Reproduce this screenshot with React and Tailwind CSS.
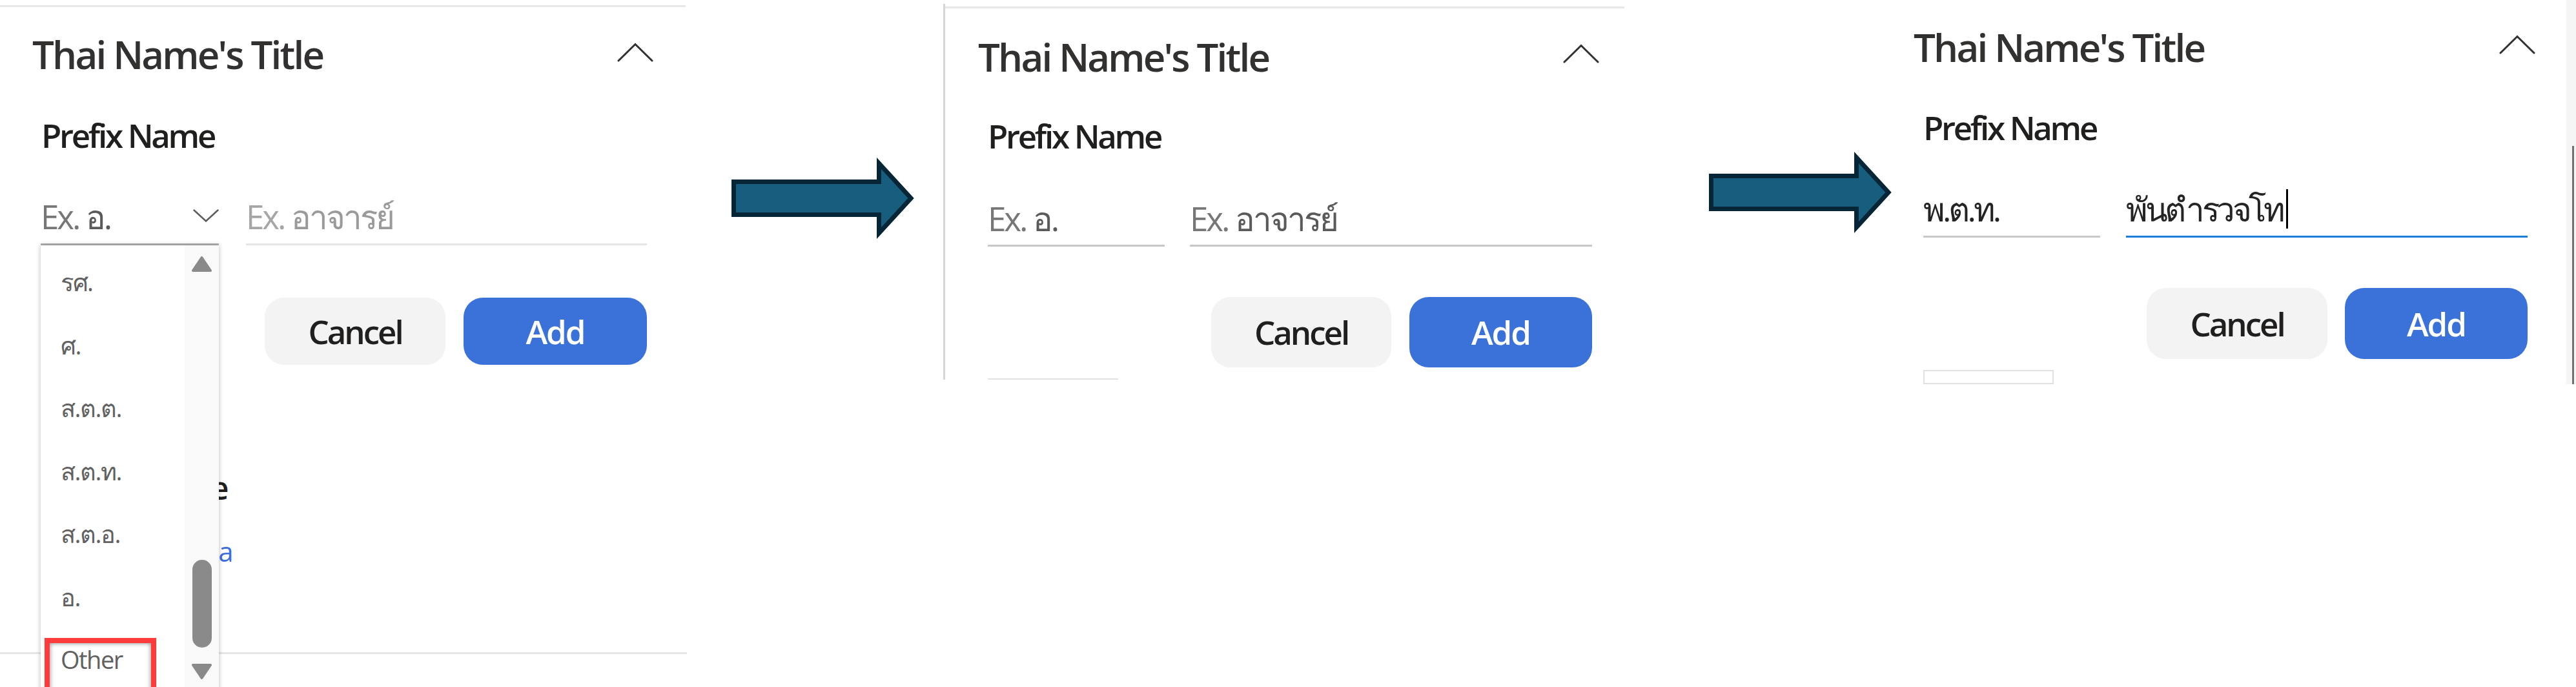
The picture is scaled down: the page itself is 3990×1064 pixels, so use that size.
import React from "react";

function ChevronUp({ className = "" }) {
  return (
    <svg className={className} width="56" height="30" viewBox="0 0 56 30" fill="none">
      <polyline points="2,28 28,2.5 54,28" stroke="#323130" strokeWidth="3" strokeLinecap="round" strokeLinejoin="miter" />
    </svg>
  );
}

function ChevronDown({ className = "" }) {
  return (
    <svg className={className} width="40" height="20" viewBox="0 0 40 20" fill="none">
      <polyline points="1.5,1.5 20,18.5 38.5,1.5" stroke="#5c5c5c" strokeWidth="2.5" strokeLinecap="round" />
    </svg>
  );
}

function Arrow({ className = "" }) {
  return (
    <svg className={className} width="296" height="126" viewBox="0 0 296 126">
      <polygon
        points="10.5,37.5 235.5,37.5 235.5,9 285,63 235.5,117 235.5,88.5 10.5,88.5"
        fill="#175e7e"
        stroke="#062536"
        strokeWidth="7"
        strokeLinejoin="miter"
      />
    </svg>
  );
}

function Tri({ down = false }) {
  return (
    <svg width="33" height="26" viewBox="0 0 33 26">
      {down ? (
        <polygon points="3,3 30,3 16.5,23" fill="#8a8a8a" stroke="#8a8a8a" strokeWidth="4" strokeLinejoin="round" />
      ) : (
        <polygon points="16.5,3 30,23 3,23" fill="#8a8a8a" stroke="#8a8a8a" strokeWidth="4" strokeLinejoin="round" />
      )}
    </svg>
  );
}

const items = ["รศ.", "ศ.", "ส.ต.ต.", "ส.ต.ท.", "ส.ต.อ.", "อ.", "Other"];

function Dropdown() {
  return (
    <div className="absolute left-0 top-full z-10 w-[276px] h-[720px] bg-white shadow-[0_0_7px_rgba(0,0,0,0.28)] flex">
      <div className="w-[223px] pt-[8px] flex flex-col">
        {items.map((t) => (
          <div key={t} className="h-[97.5px] shrink-0 flex items-center pl-[31px] text-[38px] tracking-[-1.5px] text-[#616161]">
            {t}
          </div>
        ))}
      </div>
      <div className="w-[53px] bg-[#f9f9f9] flex flex-col items-center pt-[16px]">
        <Tri />
        <div className="mt-[445px] w-[30px] h-[136px] rounded-full bg-[#8a8a8a]" />
        <div className="mt-[24px]">
          <Tri down />
        </div>
      </div>
      <div className="absolute left-[6px] top-[608px] w-[173px] h-[120px] border-[8px] border-[#ff3b3b]">
        <div className="w-full h-full shadow-[inset_0_0_7px_rgba(0,0,0,0.5)]" />
      </div>
    </div>
  );
}

function Buttons({ wrap, cancelW, addW, h }) {
  return (
    <div className={wrap}>
      <div className={`${cancelW} ${h} rounded-[30px] bg-[#f3f3f3] flex items-center justify-center text-[51px] tracking-[-3px] font-semibold text-[#201f1e]`}>
        Cancel
      </div>
      <div className={`${addW} ${h} rounded-[30px] bg-[#3a72d9] flex items-center justify-center text-[51px] tracking-[-2px] font-semibold text-white`}>
        Add
      </div>
    </div>
  );
}

export default function App() {
  return (
    <div className="w-[3990px] h-[1064px] bg-white flex overflow-hidden font-['Open_Sans',sans-serif]">
      {/* Panel 1 */}
      <div className="w-[1064px] h-[1064px] shrink-0 flex flex-col">
        <div className="mt-[8px] h-[3px] w-[1062px] bg-[#e8e8e8]" />
        <div className="mt-[43px] flex items-start justify-between pl-[50px] pr-[52px]">
          <div className="text-[60px] leading-[60px] tracking-[-2.8px] font-semibold text-[#323130]">Thai Name's Title</div>
          <ChevronUp className="mt-[12px]" />
        </div>
        <div className="mt-[70px] pl-[64px] text-[51px] leading-[51px] tracking-[-3.3px] font-semibold text-[#201f1e]">Prefix Name</div>
        <div className="mt-[70px] flex pl-[63px] gap-[42px]">
          <div className="relative w-[276px]">
            <div className="h-[75px] border-b-[3px] border-[#b3b3b3] flex items-start justify-between">
              <span className="text-[51px] leading-[60px] tracking-[-3px] text-[#777777]">
                Ex. <span className="text-[#5a5a5a]">อ.</span>
              </span>
              <ChevronDown className="mt-[19px]" />
            </div>
            <Dropdown />
          </div>
          <div className="w-[621px] h-[75px] border-b-[3px] border-[#e6e6e6]">
            <span className="text-[51px] leading-[60px] tracking-[-3px] text-[#a6a6a6]">
              Ex. <span className="text-[#9a9a9a]">อาจารย์</span>
            </span>
          </div>
        </div>
        <Buttons wrap="mt-[81px] flex justify-end gap-[28px] pr-[62px]" cancelW="w-[280px]" addW="w-[284px]" h="h-[104px]" />
        <div className="mt-[167px] w-[352px] text-right text-[48px] leading-[48px] tracking-[-2.5px] font-semibold text-[#201f1e]">Name</div>
        <div className="mt-[53px] w-[360px] text-right text-[42px] leading-[42px] tracking-[-1.5px] text-[#3b6fe0]">Data</div>
        <div className="mt-[135px] h-[3px] w-[1064px] bg-[#e6e6e6]" />
      </div>

      {/* Arrow 1 */}
      <div className="w-[397px] shrink-0">
        <Arrow className="ml-[62px] mt-[244px]" />
      </div>

      {/* Panel 2 */}
      <div className="w-[1055px] shrink-0 mt-[6px] h-[582px] border-l-[3px] border-[#d6d6d6] overflow-hidden flex flex-col">
        <div className="mt-[4px] h-[3px] bg-[#e8e8e8]" />
        <div className="mt-[45px] flex items-start justify-between pl-[51px] pr-[39px]">
          <div className="text-[60px] leading-[60px] tracking-[-2.8px] font-semibold text-[#323130]">Thai Name's Title</div>
          <ChevronUp className="mt-[10px]" />
        </div>
        <div className="mt-[67px] pl-[66px] text-[51px] leading-[51px] tracking-[-3.3px] font-semibold text-[#201f1e]">Prefix Name</div>
        <div className="mt-[72px] flex pl-[66px] gap-[39px]">
          <div className="w-[274px] h-[74px] border-b-[3px] border-[#c8c8c8]">
            <span className="text-[51px] leading-[60px] tracking-[-3px] text-[#777777]">
              Ex. <span className="text-[#5a5a5a]">อ.</span>
            </span>
          </div>
          <div className="w-[623px] h-[74px] border-b-[3px] border-[#c8c8c8]">
            <span className="text-[51px] leading-[60px] tracking-[-3px] text-[#777777]">
              Ex. <span className="text-[#5a5a5a]">อาจารย์</span>
            </span>
          </div>
        </div>
        <Buttons wrap="mt-[78px] flex justify-end gap-[28px] pr-[50px]" cancelW="w-[279px]" addW="w-[283px]" h="h-[109px]" />
        <div className="mt-[17px] ml-[66px] w-[202px] h-[2px] bg-[#e1e1e1]" />
      </div>

      {/* Arrow 2 */}
      <div className="w-[420px] shrink-0">
        <Arrow className="ml-[124px] mt-[235px]" />
      </div>

      {/* Panel 3 */}
      <div className="w-[1039px] shrink-0 h-[595px] overflow-hidden flex flex-col">
        <div className="mt-[43px] flex items-start justify-between pl-[28px] pr-[48px]">
          <div className="text-[60px] leading-[60px] tracking-[-2.8px] font-semibold text-[#323130]">Thai Name's Title</div>
          <ChevronUp className="mt-[11px]" />
        </div>
        <div className="mt-[69px] pl-[43px] text-[51px] leading-[51px] tracking-[-3.3px] font-semibold text-[#201f1e]">Prefix Name</div>
        <div className="mt-[70px] flex pl-[43px] gap-[40px]">
          <div className="w-[274px] h-[75px] border-b-[3px] border-[#c8c8c8]">
            <span className="text-[51px] leading-[60px] tracking-[-4px] text-[#252423]">พ.ต.ท.</span>
          </div>
          <div className="w-[622px] h-[75px] border-b-[3px] border-[#1a7fd8] flex items-start">
            <span className="text-[51px] leading-[60px] tracking-[-4.5px] text-[#252423]">พันตำรวจโท</span>
            <div className="ml-[6px] w-[3px] h-[61px] bg-black" />
          </div>
        </div>
        <Buttons wrap="mt-[78px] flex justify-end gap-[27px] pr-[60px]" cancelW="w-[280px]" addW="w-[283px]" h="h-[110px]" />
        <div className="mt-[17px] ml-[43px] w-[202px] h-[30px] border-2 border-[#e1e1e1]" />
      </div>

      {/* Right strip */}
      <div className="w-[15px] shrink-0 h-[595px] bg-[#f5f5f5] flex flex-col">
        <div className="mt-[226px] ml-[9px] w-[3px] h-[369px] bg-[#707070]" />
      </div>
    </div>
  );
}
